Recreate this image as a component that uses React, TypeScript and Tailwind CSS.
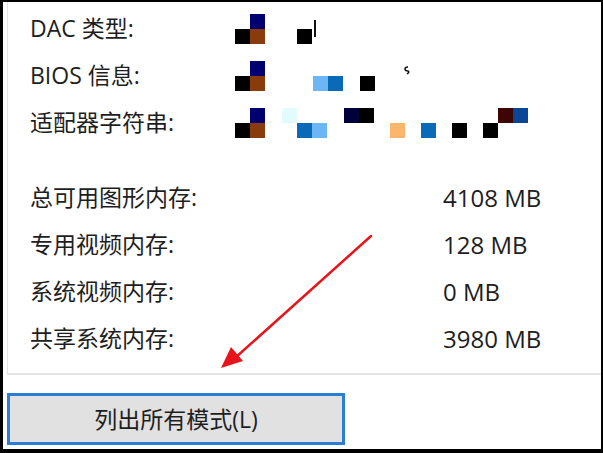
import React from 'react'

type Block = { x: number; y: number; c: string }

// mosaic blocks of the redacted values, coords relative to x=235 and row top
const MOSAIC: Block[][] = [
  [
    { x: 0, y: 15, c: '#000000' },
    { x: 15, y: 0, c: '#00006e' },
    { x: 15, y: 15, c: '#8a3b0c' },
    { x: 62, y: 15, c: '#000000' },
  ],
  [
    { x: 0, y: 15, c: '#000000' },
    { x: 15, y: 0, c: '#00006e' },
    { x: 15, y: 15, c: '#8a3b0c' },
    { x: 78, y: 15, c: '#6db6f5' },
    { x: 93, y: 15, c: '#0a6ab8' },
    { x: 125, y: 15, c: '#000000' },
  ],
  [
    { x: 0, y: 15, c: '#000000' },
    { x: 15, y: 0, c: '#00006e' },
    { x: 15, y: 15, c: '#8a3b0c' },
    { x: 47, y: 0, c: '#e3fbfd' },
    { x: 62, y: 15, c: '#0a6ab8' },
    { x: 77, y: 15, c: '#6db6f5' },
    { x: 109, y: 0, c: '#00003a' },
    { x: 124, y: 0, c: '#000000' },
    { x: 155, y: 15, c: '#fbb56c' },
    { x: 186, y: 15, c: '#0a6ab8' },
    { x: 217, y: 15, c: '#000000' },
    { x: 248, y: 15, c: '#000000' },
    { x: 263, y: 0, c: '#3d0505' },
    { x: 278, y: 0, c: '#0a4596' },
  ],
]

function Mosaic({ blocks, extra }: { blocks: Block[]; extra?: React.ReactNode }) {
  return (
    <svg width="300" height="30" viewBox="0 0 300 30" className="mt-[1px] block">
      {blocks.map((b, i) => (
        <rect key={i} x={b.x} y={b.y} width="15" height="15" fill={b.c} />
      ))}
      {extra}
    </svg>
  )
}

const INFO = [
  { label: 'DAC 类型:', blocks: MOSAIC[0], extra: <rect x="79" y="6" width="2" height="17" fill="#111" /> },
  {
    label: 'BIOS 信息:',
    blocks: MOSAIC[1],
    extra: <path d="M173 6 q-3 0 -3 2 q0 2 3 2 q2 1 -1 3" stroke="#111" strokeWidth="1.5" fill="none" />,
  },
  { label: '适配器字符串:', blocks: MOSAIC[2] },
]

const MEMORY = [
  { label: '总可用图形内存:', value: '4108 MB' },
  { label: '专用视频内存:', value: '128 MB' },
  { label: '系统视频内存:', value: '0 MB' },
  { label: '共享系统内存:', value: '3980 MB' },
]

export default function App() {
  return (
    <div
      className="relative h-[453px] w-[603px] overflow-hidden border-t-2 border-r-2 border-b-4 border-l-[3px] border-black bg-white text-[23px] text-[#1e1e1e]"
      style={{ fontFamily: '"Open Sans", "Noto Sans CJK SC", sans-serif' }}
    >
      <div className="ml-[4px] border-b-2 border-l border-[#e3e3e3] pt-[3px] pb-[11px]">
        {INFO.map(row => (
          <div key={row.label} className="flex h-[47px] items-center">
            <span className="w-[227px] pl-[22px] leading-none">{row.label}</span>
            <Mosaic blocks={row.blocks} extra={row.extra} />
          </div>
        ))}
        <div className="h-[28px]" />
        {MEMORY.map(row => (
          <div key={row.label} className="flex h-[47px] items-center">
            <span className="w-[435px] pl-[22px] leading-none">{row.label}</span>
            <span className="text-[24px] leading-none">{row.value}</span>
          </div>
        ))}
      </div>

      <button
        type="button"
        className="mt-[18px] ml-[4px] flex h-[52px] w-[338px] items-center justify-center border-[3px] border-[#2a7fd4] bg-[#e1e1e1] text-[23px] text-[#1e1e1e]"
      >
        列出所有模式(L)
      </button>

      <svg className="pointer-events-none absolute left-0 top-0" width="603" height="453" viewBox="0 0 603 453">
        <line x1="368" y1="234" x2="232" y2="356" stroke="#e8141b" strokeWidth="2.5" strokeLinecap="round" />
        <polygon points="218,366 228,345 240,359" fill="#e8141b" />
      </svg>
    </div>
  )
}
